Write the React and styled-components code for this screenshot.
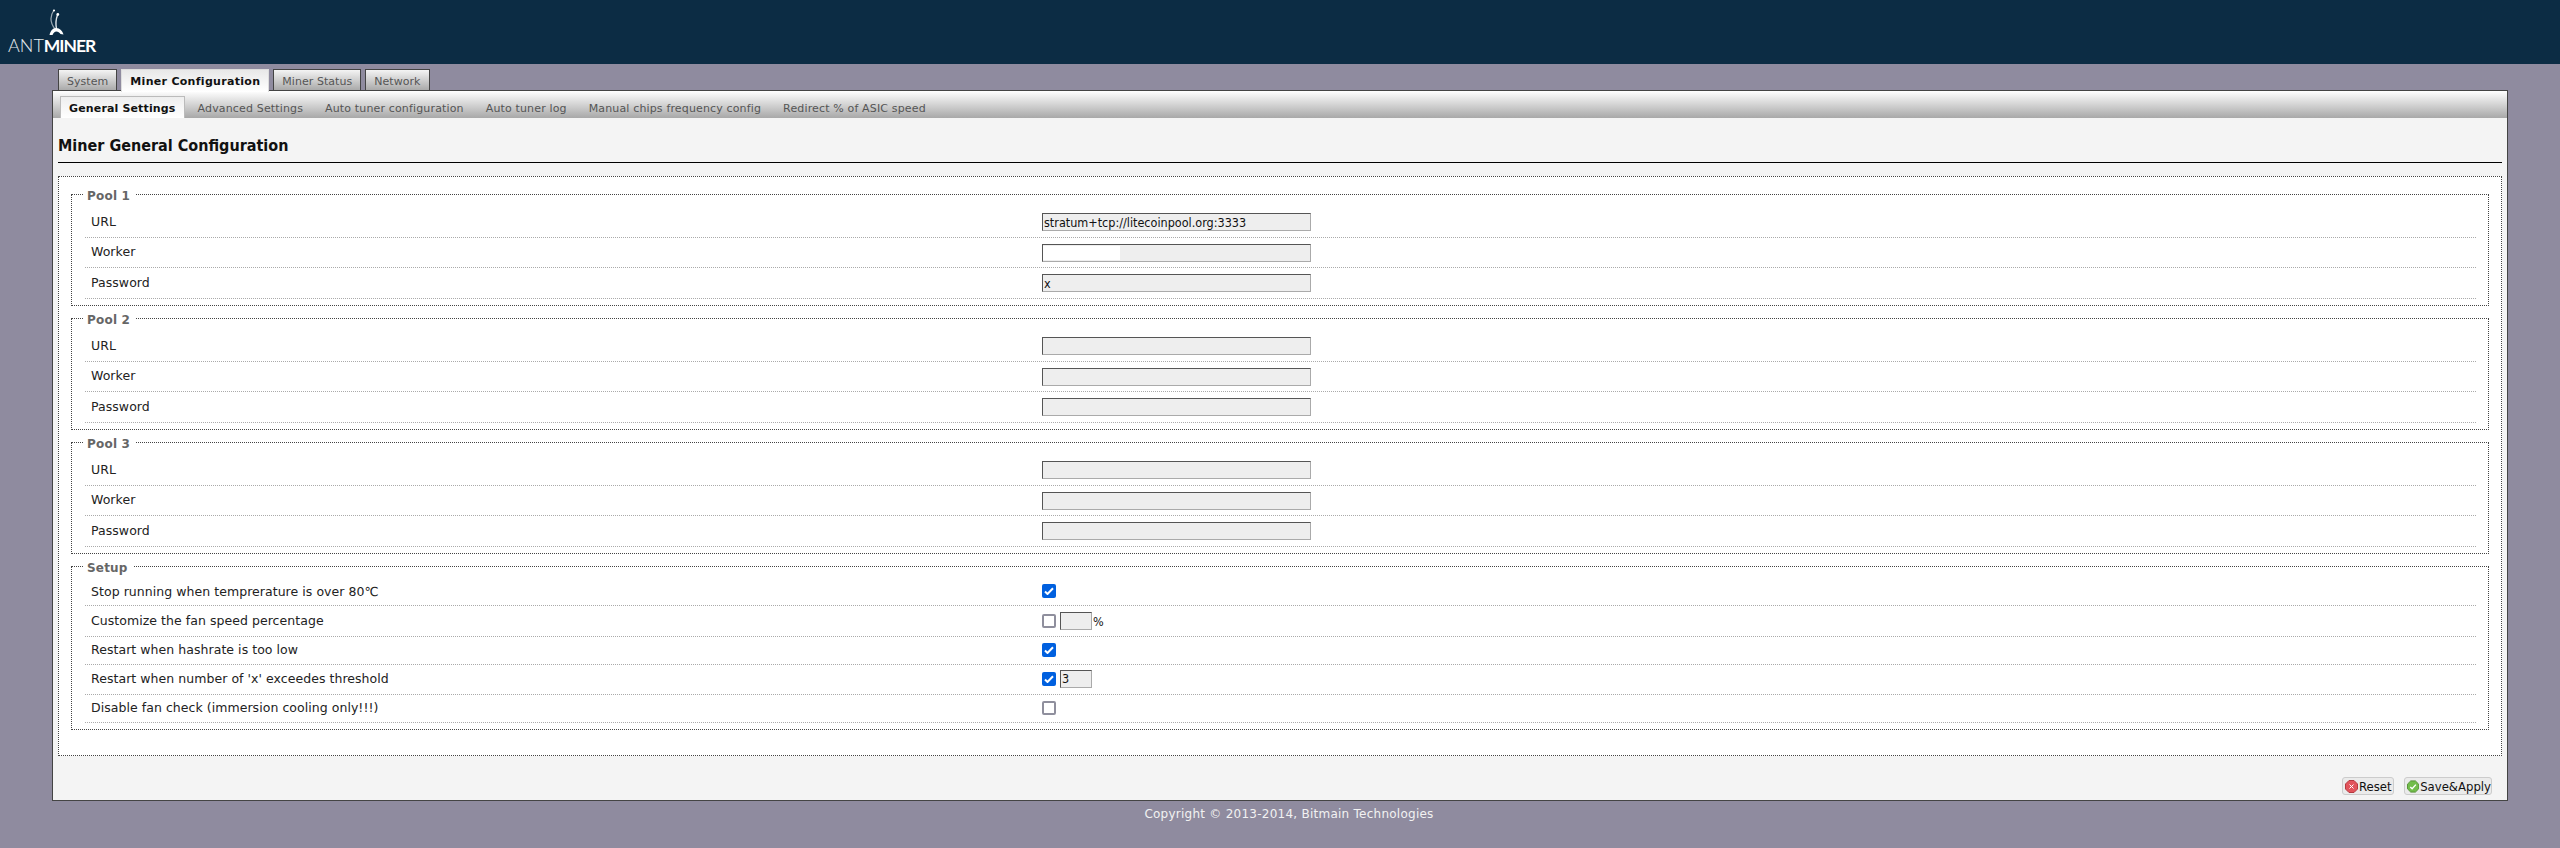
import React from 'react';
import styled, { createGlobalStyle } from 'styled-components';

const Global = createGlobalStyle`
  html, body { margin: 0; padding: 0; background: #8f8b9f; }
  body { font-family: "DejaVu Sans", Verdana, sans-serif; font-size: 11px; color: #222; }
`;
const Header = styled.header`height: 64px; background: #0c2c44; display: flex; align-items: flex-end;`;
const Logo = styled.div`position: relative; width: 110px; height: 64px; color: #fff;`;
const LogoText = styled.div`
  position: absolute; left: 8px; top: 34px; font-family: Lato, sans-serif; font-size: 18px; line-height: 22px;
  font-weight: 300; color: #e6ebee; white-space: nowrap;
  b { font-weight: 700; color: #fff; font-size: 17.5px; letter-spacing: -1px; }
`;
const Main = styled.main`padding: 0 52px;`;
const Tabs = styled.nav`display: flex; gap: 4px; padding: 5px 0 0 6px; height: 22px; position: relative; z-index: 1;`;
const Tab = styled.a`
  display: block; box-sizing: border-box; height: ${p => p.$active ? '23px' : '22px'}; padding: 1px 8px 0; line-height: 21px;
  border: 1px solid ${p => p.$active ? '#ccc' : '#444'}; ${p => p.$active ? 'border-bottom: none; border-color: #ddd;' : ''}
  background: ${p => p.$active ? 'linear-gradient(#e8e8e8, #fff)' : 'linear-gradient(#f4f4f4, #aaa)'};
  color: ${p => p.$active ? '#111' : '#555'}; font-weight: ${p => p.$active ? 700 : 400}; letter-spacing: ${p => p.$active ? '.3px' : '.05px'};
`;
const Panel = styled.section`box-sizing: border-box; height: 711px; margin-top: -1px; background: #f4f4f4; border: 1px solid #444; display: flex; flex-direction: column;`;
const SubBar = styled.div`height: 27px; box-sizing: border-box; background: linear-gradient(#fff, #a8a8a8); display: flex; padding: 5px 0 0 7px;`;
const SubTab = styled.a`
  display: block; box-sizing: border-box; height: 22px; line-height: 21px; padding: 1px ${p => p.$active ? 8 : 10}px 0; margin-right: ${p => p.$active ? '2px' : '0'};
  letter-spacing: .15px; color: ${p => p.$active ? '#111' : '#555'}; font-weight: ${p => p.$active ? 700 : 400};
  ${p => p.$active ? 'background: linear-gradient(#eee, #fff); border: 1px solid #bbb; border-bottom: none;' : 'border: 1px solid transparent;'}
`;
const Content = styled.div`padding: 0 5px; flex: 1;`;
const Title = styled.h1`
  margin: 0; height: 45px; box-sizing: border-box; padding-top: 18px; font: 700 16px/20px "DejaVu Sans Condensed", "DejaVu Sans", sans-serif;
  color: #111; border-bottom: 1px solid #000;
`;
const Box = styled.form`
  margin-top: 13px; box-sizing: border-box; height: 580px; background: #fff; border: 1px dotted #444; padding: 10px 12px 0;
`;
const Group = styled.fieldset`
  margin: 0; padding: 6px 12px 6px 13px; border: 1px dotted #444; min-width: 0;
  & + & { margin-top: 5px; }
`;
const Legend = styled.legend`
  margin-left: -2px; padding: 0 6px 0 4px; font-size: 12px; font-weight: 700; color: #666; line-height: 14px; letter-spacing: .2px;
  position: relative; top: 2px;
`;
const Row = styled.div`
  height: ${p => p.$h}px; box-sizing: border-box; display: flex; align-items: center; border-bottom: 1px dotted #aaa; padding-left: 6px;
`;
const Label = styled.span`width: 951px; flex: none; font-size: 12.5px; letter-spacing: .05px; color: #222; position: relative; top: -1px;`;
const Controls = styled.div`display: flex; align-items: center; gap: 4px; position: relative; top: ${p => p.$up ? -1 : 0}px;`;
const Input = styled.input`
  box-sizing: border-box; width: ${p => p.$w || 269}px; height: 18px; padding: 0 1px; margin: 0; background: #eee;
  border: 1px solid; border-color: #555 #aaa #aaa #555; outline: none; font: 12.5px "DejaVu Sans Condensed", sans-serif; color: #111;
`;
const Redact = styled.span`position: absolute; left: 1px; top: 2px; width: 77px; height: 14px; background: #fff;`;
const Check = styled.span`
  display: inline-flex; align-items: center; justify-content: center; box-sizing: border-box; width: 14px; height: 14px; border-radius: 2px;
  background: ${p => p.$on ? '#0060df' : '#fff'}; border: ${p => p.$on ? 'none' : '2px solid #8f8f9d'};
`;
const Pct = styled.span`font: 12.5px "DejaVu Sans Condensed", sans-serif; color: #111; margin-left: -3px;`;
const Actions = styled.div`display: flex; justify-content: flex-end; gap: 10px; padding: 21px 10px 0 0;`;
const Button = styled.button`
  display: flex; align-items: center; gap: 1px; box-sizing: border-box; height: 18px; width: ${p => p.$w}px; padding: 0 0 0 2px; margin: 0;
  background: #ebebeb; border: 1px solid #ccc; border-radius: 3px; font: 13px "DejaVu Sans Condensed", sans-serif; color: #111; white-space: nowrap;
`;
const Footer = styled.footer`text-align: center; color: #f2f2f2; font-size: 12px; letter-spacing: .25px; line-height: 14px; padding: 6px 0 0 18px;`;

const Ant = () => (
  <svg width="18" height="28" viewBox="48 9 18 28" style={{ position: 'absolute', left: 48, top: 9 }}>
    <path d="M54 10C50.500 15 49.500 22 55 29" fill="none" stroke="#9aa8b2" strokeWidth="1.2" />
    <path d="M57.500 15C56 19 55.500 24 56.500 29" fill="none" stroke="#dfe5e9" strokeWidth="1.400" />
    <circle cx="54" cy="10.500" r="1.100" fill="#fff" />
    <circle cx="57.800" cy="14.500" r="1.400" fill="#fff" />
    <path d="M49.500 35C50.500 31 52.500 28 56 28C60 28 62.500 31 63.500 34.500L60.500 34C59.500 32.500 58 31.500 56.500 31.500C54.500 31.500 53.500 33 52.500 35Z" fill="#fff" />
  </svg>
);
const CheckMark = () => (
  <svg width="10" height="8" viewBox="0 0 10 8"><path d="M1 4.500L3.500 7L9 1.300" fill="none" stroke="#fff" strokeWidth="2" /></svg>
);
const ResetIcon = () => (
  <svg width="13" height="13" viewBox="0 0 13 13">
    <path d="M4 .5H9L12.500 4V9L9 12.500H4L.5 9V4Z" fill="#e2545c" stroke="#b53a40" />
    <path d="M4.500 4.500L8.500 8.500M8.500 4.500L4.500 8.500" stroke="#fff" strokeWidth="1" />
  </svg>
);
const SaveIcon = () => (
  <svg width="13" height="13" viewBox="0 0 13 13">
    <path d="M4 .5H9L12.500 4V9L9 12.500H4L.5 9V4Z" fill="#72bd4a" stroke="#4f8d30" />
    <path d="M3.500 7L5.500 9L9.500 4.500" fill="none" stroke="#fff" strokeWidth="1.500" />
  </svg>
);

const pools = [
  ['Pool 1', 'stratum+tcp://litecoinpool.org:3333', '', 'x'],
  ['Pool 2', '', '', ''],
  ['Pool 3', '', '', ''],
];
const setup = [
  ['Stop running when temprerature is over 80℃', true, null, 27, true],
  ['Customize the fan speed percentage', false, { v: '', pct: true }, 31, false],
  ['Restart when hashrate is too low', true, null, 28, true],
  ['Restart when number of \'x\' exceedes threshold', true, { v: '3' }, 30, true],
  ['Disable fan check (immersion cooling only!!!)', false, null, 28, true],
];

export default function App() {
  return (
    <>
      <Global />
      <Header>
        <Logo>
          <Ant />
          <LogoText>ANT<b>MINER</b></LogoText>
        </Logo>
      </Header>
      <Main>
        <Tabs>
          <Tab>System</Tab>
          <Tab $active>Miner Configuration</Tab>
          <Tab>Miner Status</Tab>
          <Tab>Network</Tab>
        </Tabs>
        <Panel>
          <SubBar>
            <SubTab $active>General Settings</SubTab>
            <SubTab>Advanced Settings</SubTab>
            <SubTab>Auto tuner configuration</SubTab>
            <SubTab>Auto tuner log</SubTab>
            <SubTab>Manual chips frequency config</SubTab>
            <SubTab>Redirect % of ASIC speed</SubTab>
          </SubBar>
          <Content>
            <Title>Miner General Configuration</Title>
            <Box>
              {pools.map(([name, url, worker, pass], i) => (
                <Group key={name}>
                  <Legend>{name}</Legend>
                  <Row $h={31}><Label>URL</Label><Controls><Input readOnly value={url} /></Controls></Row>
                  <Row $h={30}><Label>Worker</Label><Controls><Input readOnly value={worker} />{i === 0 && <Redact />}</Controls></Row>
                  <Row $h={31}><Label>Password</Label><Controls><Input readOnly value={pass} /></Controls></Row>
                </Group>
              ))}
              <Group>
                <Legend>Setup</Legend>
                {setup.map(([label, on, extra, h, up]) => (
                  <Row key={label} $h={h}>
                    <Label>{label}</Label>
                    <Controls $up={up}>
                      <Check $on={on}>{on && <CheckMark />}</Check>
                      {extra && <Input readOnly $w={32} value={extra.v} />}
                      {extra && extra.pct && <Pct>%</Pct>}
                    </Controls>
                  </Row>
                ))}
              </Group>
            </Box>
            <Actions>
              <Button $w={52}><ResetIcon />Reset</Button>
              <Button $w={88}><SaveIcon />Save&amp;Apply</Button>
            </Actions>
          </Content>
        </Panel>
      </Main>
      <Footer>Copyright © 2013-2014, Bitmain Technologies</Footer>
    </>
  );
}
